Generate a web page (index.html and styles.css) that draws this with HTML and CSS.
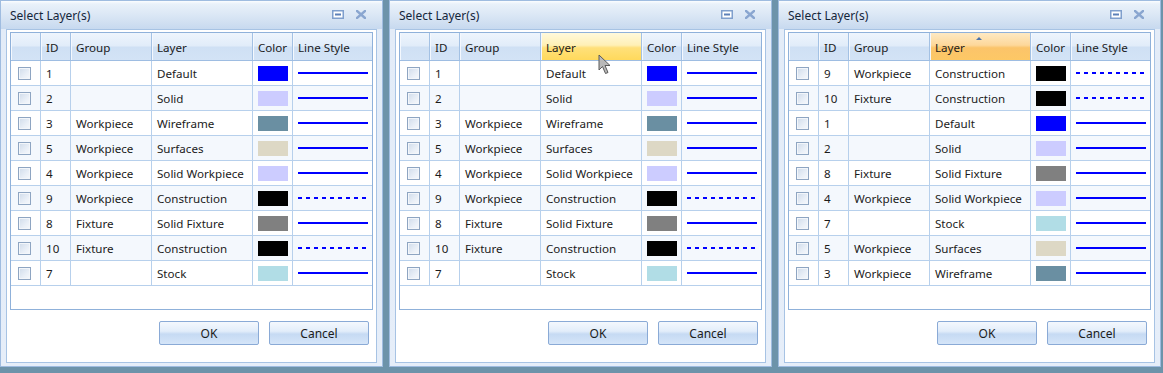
FILE: index.html
```html
<!DOCTYPE html>
<html lang="en">
<head>
    <meta charset="UTF-8">
    <title>Select Layer(s)</title>
    <link rel="stylesheet" href="styles.css">
</head>
<body>
<div class="desk">

    <!-- dialog 1: default order -->
    <div class="window">
        <div class="titlebar">
            <span class="title">Select Layer(s)</span>
            <span class="tb-icons">
                <svg width="12" height="9" viewBox="0 0 12 9"><rect x="0.75" y="0.75" width="10.5" height="7.5" fill="#fff" stroke="#7f9fcd" stroke-width="1.5"/><rect x="3" y="3.5" width="6" height="2" fill="#5c80b8"/></svg>
                <svg width="10" height="9" viewBox="0 0 10 9"><path d="M1 1 L9 8 M9 1 L1 8" stroke="#8aa6d0" stroke-width="2.4" stroke-linecap="square"/></svg>
            </span>
        </div>
        <div class="panel">
            <div class="grid">
                <div class="row head">
                    <div class="cell"></div><div class="cell">ID</div><div class="cell">Group</div><div class="cell">Layer</div><div class="cell">Color</div><div class="cell">Line Style</div>
                </div>
                <div class="row"><div class="cell chk"><span class="box"></span></div><div class="cell">1</div><div class="cell"></div><div class="cell">Default</div><div class="cell"><span class="swatch c-blue"></span></div><div class="cell"><span class="line"></span></div></div>
                <div class="row"><div class="cell chk"><span class="box"></span></div><div class="cell">2</div><div class="cell"></div><div class="cell">Solid</div><div class="cell"><span class="swatch c-lav"></span></div><div class="cell"><span class="line"></span></div></div>
                <div class="row"><div class="cell chk"><span class="box"></span></div><div class="cell">3</div><div class="cell">Workpiece</div><div class="cell">Wireframe</div><div class="cell"><span class="swatch c-slate"></span></div><div class="cell"><span class="line"></span></div></div>
                <div class="row"><div class="cell chk"><span class="box"></span></div><div class="cell">5</div><div class="cell">Workpiece</div><div class="cell">Surfaces</div><div class="cell"><span class="swatch c-beige"></span></div><div class="cell"><span class="line"></span></div></div>
                <div class="row"><div class="cell chk"><span class="box"></span></div><div class="cell">4</div><div class="cell">Workpiece</div><div class="cell">Solid Workpiece</div><div class="cell"><span class="swatch c-lav"></span></div><div class="cell"><span class="line"></span></div></div>
                <div class="row"><div class="cell chk"><span class="box"></span></div><div class="cell">9</div><div class="cell">Workpiece</div><div class="cell">Construction</div><div class="cell"><span class="swatch c-black"></span></div><div class="cell"><span class="line dash"></span></div></div>
                <div class="row"><div class="cell chk"><span class="box"></span></div><div class="cell">8</div><div class="cell">Fixture</div><div class="cell">Solid Fixture</div><div class="cell"><span class="swatch c-gray"></span></div><div class="cell"><span class="line"></span></div></div>
                <div class="row"><div class="cell chk"><span class="box"></span></div><div class="cell">10</div><div class="cell">Fixture</div><div class="cell">Construction</div><div class="cell"><span class="swatch c-black"></span></div><div class="cell"><span class="line dash"></span></div></div>
                <div class="row"><div class="cell chk"><span class="box"></span></div><div class="cell">7</div><div class="cell"></div><div class="cell">Stock</div><div class="cell"><span class="swatch c-sky"></span></div><div class="cell"><span class="line"></span></div></div>
            </div>
            <div class="actions">
                <button>OK</button>
                <button>Cancel</button>
            </div>
        </div>
    </div>

    <!-- dialog 2: mouse over the Layer header -->
    <div class="window">
        <div class="titlebar">
            <span class="title">Select Layer(s)</span>
            <span class="tb-icons">
                <svg width="12" height="9" viewBox="0 0 12 9"><rect x="0.75" y="0.75" width="10.5" height="7.5" fill="#fff" stroke="#7f9fcd" stroke-width="1.5"/><rect x="3" y="3.5" width="6" height="2" fill="#5c80b8"/></svg>
                <svg width="10" height="9" viewBox="0 0 10 9"><path d="M1 1 L9 8 M9 1 L1 8" stroke="#8aa6d0" stroke-width="2.4" stroke-linecap="square"/></svg>
            </span>
        </div>
        <div class="panel">
            <div class="grid">
                <div class="row head">
                    <div class="cell"></div><div class="cell">ID</div><div class="cell">Group</div><div class="cell hover">Layer</div><div class="cell">Color</div><div class="cell">Line Style</div>
                </div>
                <div class="row"><div class="cell chk"><span class="box"></span></div><div class="cell">1</div><div class="cell"></div><div class="cell">Default</div><div class="cell"><span class="swatch c-blue"></span></div><div class="cell"><span class="line"></span></div></div>
                <div class="row"><div class="cell chk"><span class="box"></span></div><div class="cell">2</div><div class="cell"></div><div class="cell">Solid</div><div class="cell"><span class="swatch c-lav"></span></div><div class="cell"><span class="line"></span></div></div>
                <div class="row"><div class="cell chk"><span class="box"></span></div><div class="cell">3</div><div class="cell">Workpiece</div><div class="cell">Wireframe</div><div class="cell"><span class="swatch c-slate"></span></div><div class="cell"><span class="line"></span></div></div>
                <div class="row"><div class="cell chk"><span class="box"></span></div><div class="cell">5</div><div class="cell">Workpiece</div><div class="cell">Surfaces</div><div class="cell"><span class="swatch c-beige"></span></div><div class="cell"><span class="line"></span></div></div>
                <div class="row"><div class="cell chk"><span class="box"></span></div><div class="cell">4</div><div class="cell">Workpiece</div><div class="cell">Solid Workpiece</div><div class="cell"><span class="swatch c-lav"></span></div><div class="cell"><span class="line"></span></div></div>
                <div class="row"><div class="cell chk"><span class="box"></span></div><div class="cell">9</div><div class="cell">Workpiece</div><div class="cell">Construction</div><div class="cell"><span class="swatch c-black"></span></div><div class="cell"><span class="line dash"></span></div></div>
                <div class="row"><div class="cell chk"><span class="box"></span></div><div class="cell">8</div><div class="cell">Fixture</div><div class="cell">Solid Fixture</div><div class="cell"><span class="swatch c-gray"></span></div><div class="cell"><span class="line"></span></div></div>
                <div class="row"><div class="cell chk"><span class="box"></span></div><div class="cell">10</div><div class="cell">Fixture</div><div class="cell">Construction</div><div class="cell"><span class="swatch c-black"></span></div><div class="cell"><span class="line dash"></span></div></div>
                <div class="row"><div class="cell chk"><span class="box"></span></div><div class="cell">7</div><div class="cell"></div><div class="cell">Stock</div><div class="cell"><span class="swatch c-sky"></span></div><div class="cell"><span class="line"></span></div></div>
            </div>
            <div class="actions">
                <button>OK</button>
                <button>Cancel</button>
            </div>
        </div>
        <svg class="cursor" width="13" height="21" viewBox="0 0 13 21"><path d="M1 1 L1 16 L4.5 12.5 L7.5 19.5 L10 18.5 L7 11.5 L12 11.5 Z" fill="#b9b9b9" stroke="#5a5a5a" stroke-width="1" stroke-linejoin="round"/></svg>
    </div>

    <!-- dialog 3: sorted by Layer -->
    <div class="window">
        <div class="titlebar">
            <span class="title">Select Layer(s)</span>
            <span class="tb-icons">
                <svg width="12" height="9" viewBox="0 0 12 9"><rect x="0.75" y="0.75" width="10.5" height="7.5" fill="#fff" stroke="#7f9fcd" stroke-width="1.5"/><rect x="3" y="3.5" width="6" height="2" fill="#5c80b8"/></svg>
                <svg width="10" height="9" viewBox="0 0 10 9"><path d="M1 1 L9 8 M9 1 L1 8" stroke="#8aa6d0" stroke-width="2.4" stroke-linecap="square"/></svg>
            </span>
        </div>
        <div class="panel">
            <div class="grid">
                <div class="row head">
                    <div class="cell"></div><div class="cell">ID</div><div class="cell">Group</div><div class="cell sorted">Layer<span class="sort-arrow"></span></div><div class="cell">Color</div><div class="cell">Line Style</div>
                </div>
                <div class="row"><div class="cell chk"><span class="box"></span></div><div class="cell">9</div><div class="cell">Workpiece</div><div class="cell">Construction</div><div class="cell"><span class="swatch c-black"></span></div><div class="cell"><span class="line dash"></span></div></div>
                <div class="row"><div class="cell chk"><span class="box"></span></div><div class="cell">10</div><div class="cell">Fixture</div><div class="cell">Construction</div><div class="cell"><span class="swatch c-black"></span></div><div class="cell"><span class="line dash"></span></div></div>
                <div class="row"><div class="cell chk"><span class="box"></span></div><div class="cell">1</div><div class="cell"></div><div class="cell">Default</div><div class="cell"><span class="swatch c-blue"></span></div><div class="cell"><span class="line"></span></div></div>
                <div class="row"><div class="cell chk"><span class="box"></span></div><div class="cell">2</div><div class="cell"></div><div class="cell">Solid</div><div class="cell"><span class="swatch c-lav"></span></div><div class="cell"><span class="line"></span></div></div>
                <div class="row"><div class="cell chk"><span class="box"></span></div><div class="cell">8</div><div class="cell">Fixture</div><div class="cell">Solid Fixture</div><div class="cell"><span class="swatch c-gray"></span></div><div class="cell"><span class="line"></span></div></div>
                <div class="row"><div class="cell chk"><span class="box"></span></div><div class="cell">4</div><div class="cell">Workpiece</div><div class="cell">Solid Workpiece</div><div class="cell"><span class="swatch c-lav"></span></div><div class="cell"><span class="line"></span></div></div>
                <div class="row"><div class="cell chk"><span class="box"></span></div><div class="cell">7</div><div class="cell"></div><div class="cell">Stock</div><div class="cell"><span class="swatch c-sky"></span></div><div class="cell"><span class="line"></span></div></div>
                <div class="row"><div class="cell chk"><span class="box"></span></div><div class="cell">5</div><div class="cell">Workpiece</div><div class="cell">Surfaces</div><div class="cell"><span class="swatch c-beige"></span></div><div class="cell"><span class="line"></span></div></div>
                <div class="row"><div class="cell chk"><span class="box"></span></div><div class="cell">3</div><div class="cell">Workpiece</div><div class="cell">Wireframe</div><div class="cell"><span class="swatch c-slate"></span></div><div class="cell"><span class="line"></span></div></div>
            </div>
            <div class="actions">
                <button>OK</button>
                <button>Cancel</button>
            </div>
        </div>
    </div>

</div>
</body>
</html>
```

FILE: styles.css
```css
* {
    box-sizing: border-box;
    margin: 0;
    padding: 0;
}
body {
    font-family: 'Noto Sans', 'Liberation Sans', sans-serif;
    font-size: 11.6px;
    color: #1b1b1b;
    background-color: #6d93aa;
    width: 1163px;
    height: 373px;
    overflow: hidden;
}
.desk {
    display: flex;
    gap: 6px;
}
.window {
    position: relative;
    width: 383px;
    height: 367px;
    border: 1px solid #9fbce0;
    background: linear-gradient(#fbfdff 0, #e9f1fa 3px, #dbe7f5 14px, #c7d9ef 28px, #e3ecf8 28px, #e6eef9 100%);
    padding: 0 5px 3px;
    display: flex;
    flex-direction: column;
}
.titlebar {
    height: 28px;
    display: flex;
    align-items: center;
    justify-content: space-between;
    padding: 1px 11px 0 4px;
}
.title {
    color: #15263b;
    font-size: 12px;
}
.tb-icons {
    display: flex;
    align-items: center;
    gap: 12px;
    margin-top: -2px;
}
.tb-icons svg {
    display: block;
}
.panel {
    flex: 1;
    border: 1px solid #a7c3e4;
    background-color: #fff;
    padding: 2px 3px 0;
}
.grid {
    height: 278px;
    border: 1px solid #8fb1da;
    background-color: #fff;
}
.row {
    display: grid;
    grid-template-columns: 30px 30px 81px 101px 40px 79px;
    height: 25px;
    border-bottom: 1px solid #b7d0ec;
}
.row:nth-child(odd) {
    background-color: #f4f8fd;
}
.row.head {
    height: 28px;
    border-bottom: 1px solid #9ebde2;
    background: linear-gradient(#eef5fd 0%, #e1ecf9 48%, #cfe0f4 52%, #d3e3f6 100%);
}
.cell {
    display: flex;
    align-items: center;
    padding-left: 5px;
    border-right: 1px solid #b7d0ec;
    white-space: nowrap;
    overflow: hidden;
}
.cell:last-child {
    border-right: none;
}
.head .cell {
    padding-top: 1px;
    border-right-color: #a3c1e4;
    box-shadow: inset 1px 0 #f4f8fe;
}
.head .cell.hover {
    background: linear-gradient(#fff9dc 0%, #fff0b6 45%, #ffe07a 55%, #ffd95c 100%);
}
.head .cell.sorted {
    position: relative;
    background: linear-gradient(#fee9c4 0%, #fdd89a 45%, #fbc46a 55%, #fdc865 100%);
}
.sort-arrow {
    position: absolute;
    top: 4px;
    left: 46px;
    width: 0;
    height: 0;
    border-left: 3px solid transparent;
    border-right: 3px solid transparent;
    border-bottom: 3px solid #4d72a9;
}
.chk {
    padding-left: 7px;
}
.box {
    width: 13px;
    height: 13px;
    border: 1px solid #8ea5c2;
    background: linear-gradient(135deg, #cfdbea 0%, #e9eff7 60%, #f7f9fc 100%);
    box-shadow: inset 0 0 0 1px #f3f6fa;
}
.swatch {
    width: 30px;
    height: 15px;
}
.c-blue { background-color: #0000ff; }
.c-lav { background-color: #ccccff; }
.c-slate { background-color: #6a8fa2; }
.c-beige { background-color: #ddd8c5; }
.c-black { background-color: #000; }
.c-gray { background-color: #808080; }
.c-sky { background-color: #b1dde6; }
.line {
    width: 70px;
    height: 2px;
    background-color: #0000ff;
}
.line.dash {
    background: repeating-linear-gradient(90deg, #0000ff 0 4px, transparent 4px 8px);
}
.actions {
    display: flex;
    justify-content: flex-end;
    gap: 10px;
    margin-top: 11px;
    padding-right: 4px;
}
button {
    width: 100px;
    height: 24px;
    border: 1px solid #8aaad6;
    border-radius: 2px;
    background: linear-gradient(#f4f8fd 0%, #e2edfa 42%, #c6daf3 55%, #d5e5f8 100%);
    font-family: inherit;
    font-size: 12px;
    color: #1b1b1b;
}
.cursor {
    position: absolute;
    left: 208px;
    top: 53px;
}
```
